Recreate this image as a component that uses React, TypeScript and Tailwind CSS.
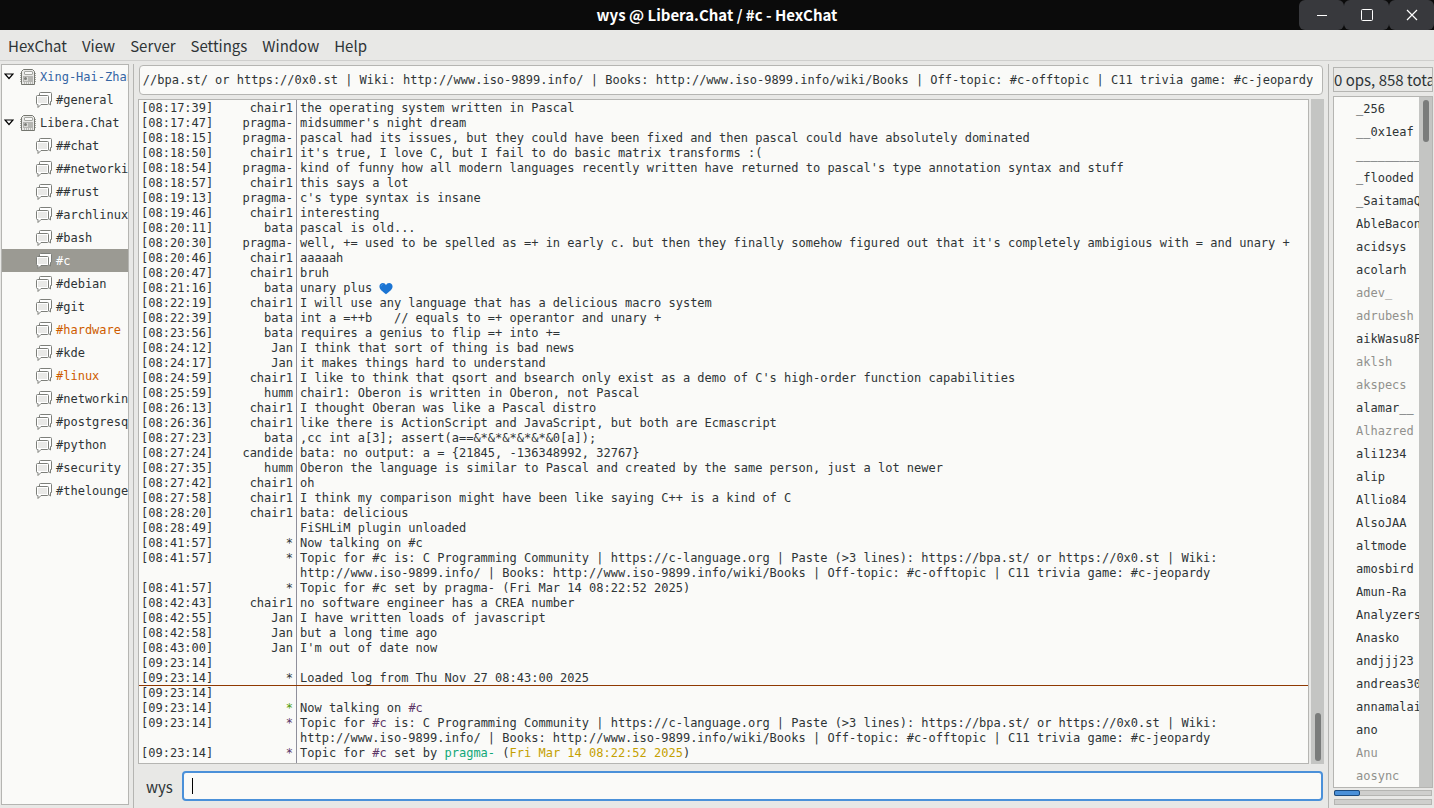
import React, { useEffect, useRef, useState } from "react";

interface Channel {
  name: string;
  server?: boolean;
  tone?: string;
}

interface Line {
  time?: string;
  nick?: string;
  nickTone?: string;
  text?: React.ReactNode;
  marker?: boolean;
}

const menus = ["HexChat", "View", "Server", "Settings", "Window", "Help"];

const channels: Channel[] = [
  { name: "Xing-Hai-Zhan", server: true, tone: "text-[#3465a4]" },
  { name: "#general" },
  { name: "Libera.Chat", server: true },
  { name: "##chat" },
  { name: "##networking" },
  { name: "##rust" },
  { name: "#archlinux" },
  { name: "#bash" },
  { name: "#c" },
  { name: "#debian" },
  { name: "#git" },
  { name: "#hardware", tone: "text-[#ce5c00]" },
  { name: "#kde" },
  { name: "#linux", tone: "text-[#ce5c00]" },
  { name: "#networking" },
  { name: "#postgresql" },
  { name: "#python" },
  { name: "#security" },
  { name: "#thelounge" },
];

const links =
  "C Programming Community | https://c-language.org | Paste (>3 lines): https://bpa.st/ or https://0x0.st | Wiki: http://www.iso-9899.info/ | Books: http://www.iso-9899.info/wiki/Books | Off-topic: #c-offtopic | C11 trivia game: #c-jeopardy";

const Chan = () => <span className="text-[#5c3566]">#c</span>;

const lines: Line[] = [
  { time: "08:17:39", nick: "chair1", text: "the operating system written in Pascal" },
  { time: "08:17:47", nick: "pragma-", text: "midsummer's night dream" },
  { time: "08:18:15", nick: "pragma-", text: "pascal had its issues, but they could have been fixed and then pascal could have absolutely dominated" },
  { time: "08:18:50", nick: "chair1", text: "it's true, I love C, but I fail to do basic matrix transforms :(" },
  { time: "08:18:54", nick: "pragma-", text: "kind of funny how all modern languages recently written have returned to pascal's type annotation syntax and stuff" },
  { time: "08:18:57", nick: "chair1", text: "this says a lot" },
  { time: "08:19:13", nick: "pragma-", text: "c's type syntax is insane" },
  { time: "08:19:46", nick: "chair1", text: "interesting" },
  { time: "08:20:11", nick: "bata", text: "pascal is old..." },
  { time: "08:20:30", nick: "pragma-", text: "well, += used to be spelled as =+ in early c. but then they finally somehow figured out that it's completely ambigious with = and unary +" },
  { time: "08:20:46", nick: "chair1", text: "aaaaah" },
  { time: "08:20:47", nick: "chair1", text: "bruh" },
  { time: "08:21:16", nick: "bata", text: <>unary plus <Heart /></> },
  { time: "08:22:19", nick: "chair1", text: "I will use any language that has a delicious macro system" },
  { time: "08:22:39", nick: "bata", text: "int a =++b   // equals to =+ operantor and unary +" },
  { time: "08:23:56", nick: "bata", text: "requires a genius to flip =+ into +=" },
  { time: "08:24:12", nick: "Jan", text: "I think that sort of thing is bad news" },
  { time: "08:24:17", nick: "Jan", text: "it makes things hard to understand" },
  { time: "08:24:59", nick: "chair1", text: "I like to think that qsort and bsearch only exist as a demo of C's high-order function capabilities" },
  { time: "08:25:59", nick: "humm", text: "chair1: Oberon is written in Oberon, not Pascal" },
  { time: "08:26:13", nick: "chair1", text: "I thought Oberan was like a Pascal distro" },
  { time: "08:26:36", nick: "chair1", text: "like there is ActionScript and JavaScript, but both are Ecmascript" },
  { time: "08:27:23", nick: "bata", text: ",cc int a[3]; assert(a==&*&*&*&*&*&0[a]);" },
  { time: "08:27:24", nick: "candide", text: "bata: no output: a = {21845, -136348992, 32767}" },
  { time: "08:27:35", nick: "humm", text: "Oberon the language is similar to Pascal and created by the same person, just a lot newer" },
  { time: "08:27:42", nick: "chair1", text: "oh" },
  { time: "08:27:58", nick: "chair1", text: "I think my comparison might have been like saying C++ is a kind of C" },
  { time: "08:28:20", nick: "chair1", text: "bata: delicious" },
  { time: "08:28:49", text: "FiSHLiM plugin unloaded" },
  { time: "08:41:57", nick: "*", text: "Now talking on #c" },
  { time: "08:41:57", nick: "*", text: "Topic for #c is: " + links },
  { time: "08:41:57", nick: "*", text: "Topic for #c set by pragma- (Fri Mar 14 08:22:52 2025)" },
  { time: "08:42:43", nick: "chair1", text: "no software engineer has a CREA number" },
  { time: "08:42:55", nick: "Jan", text: "I have written loads of javascript" },
  { time: "08:42:58", nick: "Jan", text: "but a long time ago" },
  { time: "08:43:00", nick: "Jan", text: "I'm out of date now" },
  { time: "09:23:14" },
  { time: "09:23:14", nick: "*", text: "Loaded log from Thu Nov 27 08:43:00 2025" },
  { time: "09:23:14", marker: true },
  { time: "09:23:14", nick: "*", nickTone: "text-[#4e9a06]", text: <>Now talking on <Chan /></> },
  { time: "09:23:14", nick: "*", nickTone: "text-[#5c3566]", text: <>Topic for <Chan /> is: {links}</> },
  {
    time: "09:23:14",
    nick: "*",
    nickTone: "text-[#5c3566]",
    text: (
      <>
        Topic for <Chan /> set by <span className="text-[#11a879]">pragma-</span> (<span className="text-[#c4a000]">Fri Mar 14 08:22:52 2025</span>)
      </>
    ),
  },
];

const users = [
  "_256", "__0x1eaf", "___________", "_flooded", "_SaitamaQ", "AbleBacon", "acidsys", "acolarh", "adev_", "adrubesh",
  "aikWasu8F", "aklsh", "akspecs", "alamar__", "Alhazred", "ali1234", "alip", "Allio84", "AlsoJAA", "altmode",
  "amosbird", "Amun-Ra", "Analyzers", "Anasko", "andjjj23", "andreas30", "annamalai", "ano", "Anu", "aosync",
];

const away = ["adev_", "adrubesh", "aklsh", "akspecs", "Alhazred", "Anu", "aosync"];

function Heart() {
  return (
    <svg className="inline-block align-top" width="14" height="15" viewBox="0 0 16 15" role="img" aria-label="blue heart">
      <path d="M8 14C4 11 0.500 8.500 0.500 5.200C0.500 3 2.300 1.300 4.400 1.300C6 1.300 7.300 2.200 8 3.700C8.700 2.200 10 1.300 11.600 1.300C13.700 1.300 15.500 3 15.500 5.200C15.500 8.500 12 11 8 14Z" fill="#1b74d3" />
      <path d="M2.500 5C2.600 3.800 3.400 3 4.500 2.900" stroke="#4c9bea" fill="none" />
    </svg>
  );
}

const Expander = () => (
  <svg width="10" height="7" viewBox="0 0 10 7" className="shrink-0">
    <path d="M1 1H9L5 5.500Z" fill="#fff" stroke="#000" strokeWidth="1.200" />
  </svg>
);

const ServerIcon = () => (
  <svg width="16" height="16" viewBox="0 0 16 16" className="shrink-0">
    <path d="M0.500 4V13M15.500 4V13" stroke="#a5a7a2" strokeDasharray="1 1" />
    <path d="M3.500 0.500H12.500L14.500 2.500V15.500H1.500V2.500Z" fill="#e9e9e7" stroke="#74766f" strokeLinejoin="round" />
    <rect x="4.500" y="2.500" width="8" height="3" rx="0.500" fill="#f8f8f7" stroke="#a5a7a2" />
    <rect x="3.500" y="7.500" width="9" height="5" fill="#dcdcd9" stroke="#b5b5b2" />
    <path d="M8 9H12M8 11H12" stroke="#8e908b" />
    <circle cx="5.500" cy="9.500" r="1.500" fill="#7d7f7a" />
    <path d="M4 14H13" stroke="#888a85" strokeDasharray="1 1" />
  </svg>
);

const ChatIcon = () => (
  <svg width="16" height="16" viewBox="0 0 16 16" className="shrink-0">
    <path d="M4.500 0.500H14.500Q15.500 0.500 15.500 1.500V9.500H14.500V13L11.500 10.500H3.500V1.500Q3.500 0.500 4.500 0.500Z" fill="#fff" stroke="#7d7f7a" strokeLinejoin="round" />
    <path d="M1.500 3.500H11.500Q12.500 3.500 12.500 4.500V11.500Q12.500 12.500 11.500 12.500H5L2 15.500V12.500H1.500Q0.500 12.500 0.500 11.500V4.500Q0.500 3.500 1.500 3.500Z" fill="#fff" stroke="#7d7f7a" strokeLinejoin="round" />
    <rect x="2" y="5" width="9" height="6" fill="#e9e9e7" />
  </svg>
);

function TitleBar() {
  const button = "flex h-[30px] w-[45px] items-center justify-center rounded-md bg-[#38393d] text-white";
  return (
    <header className="flex h-[30px] shrink-0 items-center justify-end bg-[#0b0b0b]">
      <h1 className="flex-1 pl-[135px] text-center text-[15px] font-bold text-white">wys @ Libera.Chat / #c - HexChat</h1>
      <button className={button} aria-label="Minimize">
        <svg width="12" height="12" viewBox="0 0 12 12"><path d="M1 6.500H11" stroke="currentColor" /></svg>
      </button>
      <button className={button} aria-label="Maximize">
        <svg width="12" height="12" viewBox="0 0 12 12"><rect x="0.500" y="0.500" width="11" height="11" rx="1" fill="none" stroke="currentColor" /></svg>
      </button>
      <button className={button} aria-label="Close">
        <svg width="12" height="12" viewBox="0 0 12 12"><path d="M1 1L11 11M11 1L1 11" stroke="currentColor" strokeWidth="1.200" /></svg>
      </button>
    </header>
  );
}

function ChannelTree() {
  const [active, setActive] = useState("#c");
  return (
    <nav className="my-[3px] ml-px w-32 shrink-0 overflow-hidden border border-[#b5b5b2] bg-[#fafaf8] font-['DejaVu_Sans_Mono',monospace] text-xs">
      <ul>
        {channels.map((c) => (
          <li key={c.name}>
            <button
              onClick={() => setActive(c.name)}
              className={`flex h-[23px] w-full items-center gap-1 whitespace-nowrap ${c.server ? "pl-0.5" : "pl-[34px]"} ${
                active === c.name ? "bg-[#9b9a93] text-white" : c.tone ?? ""
              }`}
            >
              {c.server ? (
                <>
                  <Expander />
                  <span className="pl-0.5"><ServerIcon /></span>
                </>
              ) : (
                <ChatIcon />
              )}
              {c.name}
            </button>
          </li>
        ))}
      </ul>
    </nav>
  );
}

function ChatLog() {
  return (
    <div className="mt-1 flex min-h-0 flex-1 gap-0.5">
      <div role="log" className="min-w-0 flex-1 overflow-hidden border border-[#b5b5b2] bg-[#fafaf8] font-['DejaVu_Sans_Mono',monospace] text-xs leading-[15px]">
        <div className="flex h-full flex-col">
          <div className="ml-[157px] h-px shrink-0 border-l border-[#8f8f9b]" />
          {lines.map((l, i) => (
            <div key={i} className={`flex shrink-0 pl-0.5 ${l.marker ? "shadow-[0_-1px_0_#8f3902]" : ""}`}>
              <span className="w-[72px] shrink-0">[{l.time}]</span>
              <span className={`w-20 shrink-0 text-right ${l.nickTone ?? ""}`}>{l.nick}</span>
              <span className="ml-[3px] min-w-0 flex-1 border-l border-[#8f8f9b] pl-[3px] whitespace-pre-wrap">{l.text}</span>
            </div>
          ))}
          <div className="ml-[157px] flex-1 border-l border-[#8f8f9b]" />
        </div>
      </div>
      <div className="flex w-[13px] shrink-0 flex-col justify-end bg-[#c4c5c3] pb-[3px] pl-1">
        <div className="h-12 w-1.5 rounded-full bg-[#7a7c7b]" />
      </div>
    </div>
  );
}

function UserList() {
  return (
    <aside className="mr-px flex w-[100px] shrink-0 flex-col pt-1.5 pb-[3px]">
      <div className="h-[25px] shrink-0 overflow-hidden border border-[#b5b5b2] text-[15px] leading-6 whitespace-nowrap">0 ops, 858 tota</div>
      <div className="mt-1 flex min-h-0 flex-1 overflow-hidden border border-[#b5b5b2] bg-[#fafaf8]">
        <ul className="min-w-0 flex-1 overflow-hidden pt-px pl-[22px] font-['DejaVu_Sans_Mono',monospace] text-xs">
          {users.map((u) => (
            <li key={u} className={`h-[23px] leading-[23px] ${away.includes(u) ? "text-[#91918d]" : ""}`}>{u}</li>
          ))}
        </ul>
        <div className="w-[13px] shrink-0 bg-[#c4c5c3] pt-[3px] pl-1">
          <div className="h-[42px] w-1.5 rounded-full bg-[#7a7c7b]" />
        </div>
      </div>
      <div className="mx-px mt-0.5 h-1.5 shrink-0 border border-[#b5b5b2] bg-[#cfcfcd]">
        <div className="-mt-px -ml-px h-1.5 w-[26px] rounded-xs border border-[#1b4a7d] bg-[#4a90d9]" />
      </div>
      <div className="mx-px mt-[3px] h-1.5 shrink-0 border border-[#b5b5b2] bg-[#cfcfcd]" />
    </aside>
  );
}

const App: React.FC = () => {
  const topicRef = useRef<HTMLInputElement>(null);
  const [message, setMessage] = useState("");

  // keep the end of a long topic in view
  useEffect(() => {
    if (topicRef.current) topicRef.current.scrollLeft = topicRef.current.scrollWidth;
  }, []);

  return (
    <div className="flex h-screen flex-col overflow-hidden bg-[#e8e8e6] font-['Noto_Sans_CJK_SC',sans-serif] text-[#2e3436]">
      <TitleBar />
      <nav className="flex h-[31px] shrink-0 items-center gap-[15px] border-b border-[#cfcfcd] px-2 pt-0.5 text-[15px]">
        {menus.map((m) => (
          <button key={m}>{m}</button>
        ))}
      </nav>
      <div className="flex min-h-0 flex-1">
        <ChannelTree />
        <div className="mt-[3px] ml-1 w-px shrink-0 bg-[#b5b5b2]" />
        <main className="ml-1 flex min-w-0 flex-1 flex-col pt-1 pb-[7px]">
          <input
            ref={topicRef}
            aria-label="Topic"
            defaultValue={links}
            className="mr-px ml-px h-[30px] shrink-0 rounded-sm border border-[#b5b5b2] bg-[#fafaf8] pr-[9px] pl-[3px] font-['DejaVu_Sans_Mono',monospace] text-xs outline-none"
          />
          <ChatLog />
          <div className="mt-[7px] mr-px flex shrink-0 items-center">
            <label htmlFor="message" className="w-11 pt-0.5 pl-2 text-[15px]">wys</label>
            <div className="relative flex-1">
              <input
                id="message"
                value={message}
                onChange={(e) => setMessage(e.target.value)}
                className="block h-[30px] w-full rounded-sm border-2 border-[#4a90d9] bg-[#fafaf8] px-2 font-['DejaVu_Sans_Mono',monospace] text-xs caret-transparent outline-none"
              />
              {message === "" && <span className="pointer-events-none absolute top-[7px] left-2.5 h-4 w-px bg-black" />}
            </div>
          </div>
        </main>
        <div className="mt-[3px] mr-1 ml-1 w-px shrink-0 bg-[#b5b5b2]" />
        <UserList />
      </div>
    </div>
  );
};

export default App;
